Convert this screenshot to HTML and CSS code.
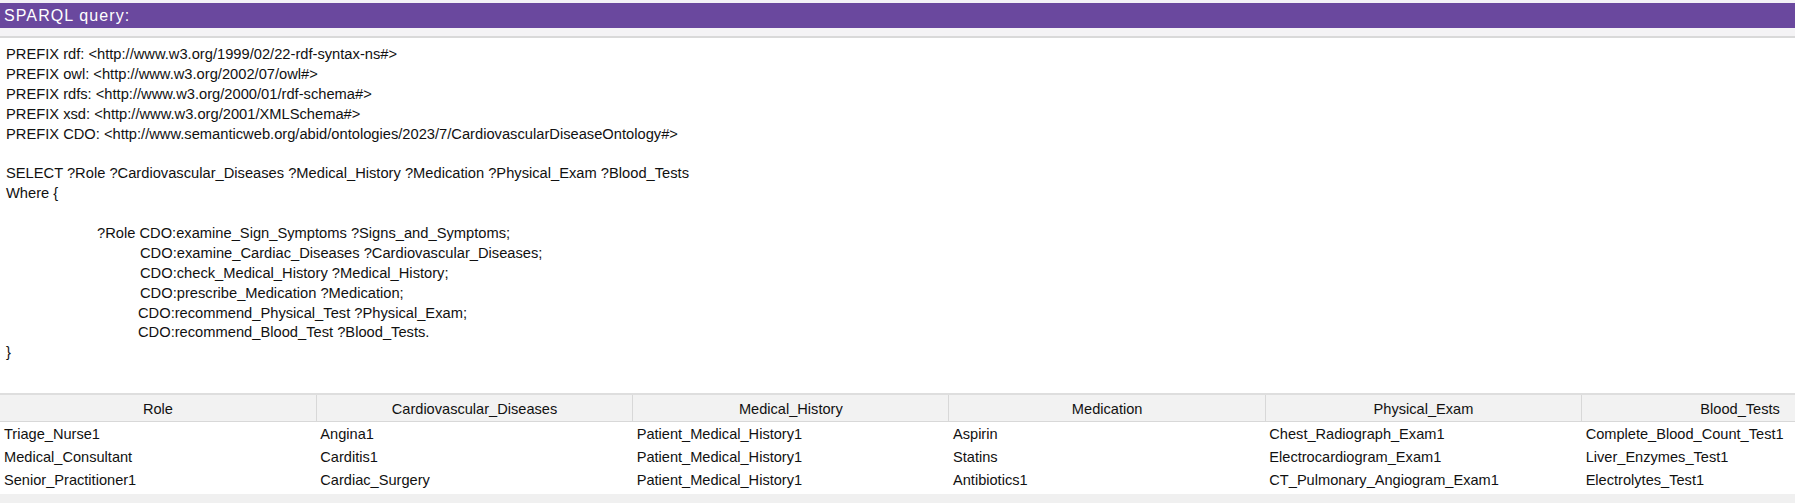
FILE: index.html
```html
<!DOCTYPE html>
<html>
<head>
<meta charset="utf-8">
<link rel="stylesheet" href="styles.css">
</head>
<body>
<div class="panel">
  <div class="titlebar">SPARQL query:</div>
  <div class="subbar"></div>
  <div class="query">
    <div class="line">PREFIX rdf: &lt;http://www.w3.org/1999/02/22-rdf-syntax-ns#&gt;</div>
    <div class="line">PREFIX owl: &lt;http://www.w3.org/2002/07/owl#&gt;</div>
    <div class="line">PREFIX rdfs: &lt;http://www.w3.org/2000/01/rdf-schema#&gt;</div>
    <div class="line">PREFIX xsd: &lt;http://www.w3.org/2001/XMLSchema#&gt;</div>
    <div class="line">PREFIX CDO: &lt;http://www.semanticweb.org/abid/ontologies/2023/7/CardiovascularDiseaseOntology#&gt;</div>
    <div class="line"></div>
    <div class="line">SELECT ?Role ?Cardiovascular_Diseases ?Medical_History ?Medication ?Physical_Exam ?Blood_Tests</div>
    <div class="line">Where {</div>
    <div class="line"></div>
    <div class="line ind1">?Role CDO:examine_Sign_Symptoms ?Signs_and_Symptoms;</div>
    <div class="line ind2">CDO:examine_Cardiac_Diseases ?Cardiovascular_Diseases;</div>
    <div class="line ind2">CDO:check_Medical_History ?Medical_History;</div>
    <div class="line ind2">CDO:prescribe_Medication ?Medication;</div>
    <div class="line ind3">CDO:recommend_Physical_Test ?Physical_Exam;</div>
    <div class="line ind3">CDO:recommend_Blood_Test ?Blood_Tests.</div>
    <div class="line">}</div>
  </div>
  <div class="results">
    <table class="grid">
      <colgroup>
        <col class="c"><col class="c"><col class="c"><col class="c"><col class="c"><col class="c">
      </colgroup>
      <thead>
        <tr>
          <th>Role</th>
          <th>Cardiovascular_Diseases</th>
          <th>Medical_History</th>
          <th>Medication</th>
          <th>Physical_Exam</th>
          <th>Blood_Tests</th>
        </tr>
      </thead>
      <tbody>
        <tr>
          <td>Triage_Nurse1</td>
          <td>Angina1</td>
          <td>Patient_Medical_History1</td>
          <td>Aspirin</td>
          <td>Chest_Radiograph_Exam1</td>
          <td>Complete_Blood_Count_Test1</td>
        </tr>
        <tr>
          <td>Medical_Consultant</td>
          <td>Carditis1</td>
          <td>Patient_Medical_History1</td>
          <td>Statins</td>
          <td>Electrocardiogram_Exam1</td>
          <td>Liver_Enzymes_Test1</td>
        </tr>
        <tr>
          <td>Senior_Practitioner1</td>
          <td>Cardiac_Surgery</td>
          <td>Patient_Medical_History1</td>
          <td>Antibiotics1</td>
          <td>CT_Pulmonary_Angiogram_Exam1</td>
          <td>Electrolytes_Test1</td>
        </tr>
      </tbody>
    </table>
    <div class="footer"></div>
  </div>
</div>
</body>
</html>
```

FILE: styles.css
```css
html, body {
  margin: 0;
  padding: 0;
  background: #ffffff;
  overflow: hidden;
}

body {
  font-family: "Liberation Sans", Arial, sans-serif;
  color: #111111;
}

.panel {
  padding-top: 3px;
  background: linear-gradient(#f3f1f6 0, #f3f1f6 3px, #ffffff 3px);
}

.titlebar {
  height: 25px;
  background: #6a489e;
  color: #ffffff;
  font-size: 16px;
  letter-spacing: 1.1px;
  line-height: 25px;
  padding-left: 4px;
  box-sizing: border-box;
}

.subbar {
  height: 8px;
  background: #f4f3f5;
  border-bottom: 2px solid #d9d9d9;
}

.query {
  padding: 7px 0 0 6px;
  height: 355px;
  box-sizing: border-box;
  font-size: 14.7px;
}

.line {
  height: 19.9px;
  line-height: 19.9px;
  white-space: pre;
}

.ind1 { padding-left: 91px; }
.ind2 { padding-left: 134px; }
.ind3 { padding-left: 132px; }

.results {
  border-top: 2px solid #dedede;
  overflow: hidden;
  width: 100%;
}

.grid {
  border-collapse: collapse;
  table-layout: fixed;
  width: 1898px;
  font-size: 14.6px;
}

.grid col.c {
  width: 316.3px;
}

.grid th {
  background: #f2f2f2;
  font-weight: normal;
  text-align: center;
  border-left: 1px solid #d8d8d8;
  border-bottom: 1px solid #d8d8d8;
  padding: 4px 0 2px 0;
  line-height: 20px;
  white-space: nowrap;
  overflow: hidden;
}

.grid th:first-child {
  border-left: none;
}

.grid td {
  height: 23px;
  padding: 0 0 0 4px;
  white-space: nowrap;
  overflow: hidden;
}

.footer {
  margin-top: 3px;
  height: 20px;
  background: #f0f0f0;
}
```
